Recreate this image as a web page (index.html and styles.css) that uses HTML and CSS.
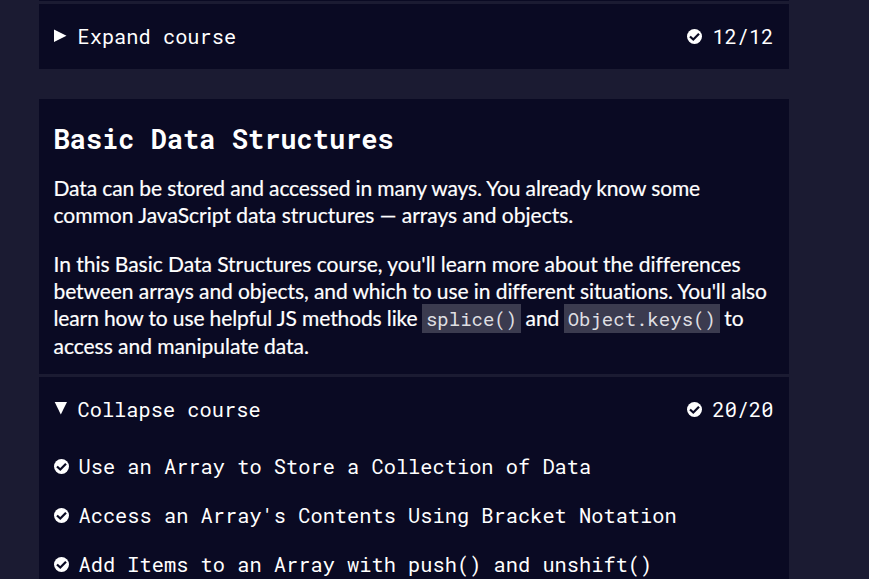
FILE: index.html
```html
<!DOCTYPE html>
<html lang="en">
<head>
<meta charset="utf-8">
<title>Courses</title>
<link rel="stylesheet" href="styles.css">
</head>
<body>
<svg class="defs" width="0" height="0"><symbol id="check" viewBox="0 0 50 50"><circle cx="25" cy="25" r="25" fill="#fff"/><path d="M10 25 L21 35 L40 16" fill="none" stroke="#0a0a23" stroke-width="7.5"/></symbol></svg>
<main class="courses">
<section class="block previous">
<div class="toggle"><svg class="arrow" viewBox="0 0 14 14"><path d="M0 0.5V13L12.5 6.7Z"/></svg><span class="label">Expand course</span><svg class="check"><use href="#check"/></svg><span class="count">12/12</span></div>
</section>
<section class="block current">
<div class="intro">
<h3>Basic Data Structures</h3>
<p><span class="tight">Data can be stored and accessed in many ways. You already know some</span><br>common JavaScript data structures — arrays and objects.</p>
<p><span class="close">In this Basic Data Structures course, you'll learn more about the differences</span><br><span class="snug">between arrays and objects, and which to use in different situations. You'll also</span><br><span class="tight">learn how to use helpful JS methods like <code>splice()</code> and <code>Object.keys()</code> to</span><br><span class="close">access and manipulate data.</span></p>
</div>
<div class="toggle"><svg class="arrow" viewBox="0 0 14 14"><path d="M0.7 0H13L6.8 12.5Z"/></svg><span class="label">Collapse course</span><svg class="check"><use href="#check"/></svg><span class="count">20/20</span></div>
<ul>
<li><svg class="check"><use href="#check"/></svg><span>Use an Array to Store a Collection of Data</span></li>
<li><svg class="check"><use href="#check"/></svg><span>Access an Array's Contents Using Bracket Notation</span></li>
<li><svg class="check"><use href="#check"/></svg><span>Add Items to an Array with push() and unshift()</span></li>
</ul>
</section>
</main>
</body>
</html>
```
FILE: styles.css
```css
* { box-sizing: border-box; }
body { margin: 0; height: 579px; overflow: hidden; background: #1b1b32; color: #fff; font: 20.35px "Roboto Mono", "DejaVu Sans Mono", monospace; }
.defs { position: absolute; }
.courses { width: 750px; margin-left: 39px; }
.block { background: #0a0a23; }
.previous { height: 69px; margin-bottom: 30px; border-top: 1px solid #0a0a23; }
.current { height: 490px; }
.toggle { height: 65px; border-top: 3px solid #1b1b32; padding: 2px 15.5px 0 15px; display: flex; align-items: center; }
.arrow { width: 14px; height: 14px; margin-right: 9.5px; fill: #fff; }
.label { flex: 1; }
.check { width: 15px; height: 15px; margin-right: 10px; }
.intro { height: 275px; padding: 22px 15px 0; font: 21px/27.2px Lato, sans-serif; font-variant-ligatures: none; }
h3 { margin: 0 0 17px -0.5px; font: bold 27px/36px "Roboto Mono", "DejaVu Sans Mono", monospace; }
p { margin: 0 0 21.4px -0.5px; white-space: nowrap; -webkit-text-stroke: 0.2px; }
.tight { letter-spacing: -0.12px; }
.snug { letter-spacing: -0.08px; }
.close { letter-spacing: -0.03px; }
code { margin: 0 -0.8px; letter-spacing: 0; font: 19px/27px "Roboto Mono", "Liberation Mono", monospace; background: #3b3b4f; color: #dfdfe2; padding: 2px 4px; -webkit-text-stroke: 0; }
ul { list-style: none; margin: 0; padding: 3px 15px 0; }
li { height: 49px; display: flex; align-items: center; white-space: pre; }
li .check { margin-right: 9.5px; }
```
